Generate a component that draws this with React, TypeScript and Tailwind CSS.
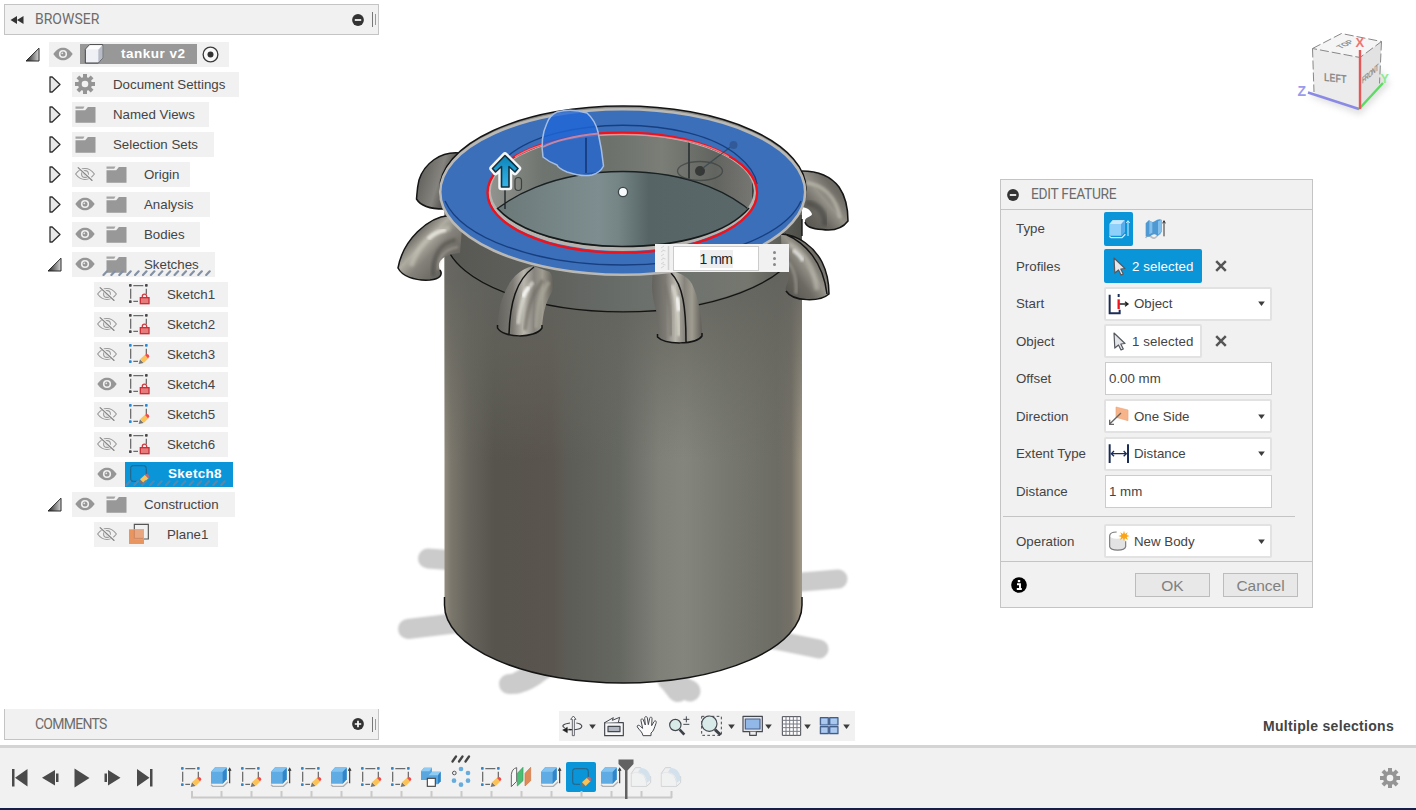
import React from 'react';

type P = { className?: string };

/* ---------- generic glyphs ---------- */

const Caret = ({ className = '' }: P) => (
  <svg viewBox="0 0 8 6" className={`h-[5px] w-[7px] shrink-0 ${className}`}>
    <path d="M0 0.5h8L4 6z" fill="#3c3c3c" />
  </svg>
);

const RoundSign = ({ plus = false }: { plus?: boolean }) => (
  <svg viewBox="0 0 12 12" className="h-[12px] w-[12px] shrink-0">
    <circle cx="6" cy="6" r="5.9" fill="#333" />
    <path d={plus ? 'M2.8 6h6.4M6 2.8v6.4' : 'M2.8 6h6.4'} stroke="#fff" strokeWidth="1.7" />
  </svg>
);

const Gear = ({ className = '' }: P) => (
  <svg viewBox="-10 -10 20 20" className={`h-5 w-5 shrink-0 ${className}`}>
    {[0, 45, 90, 135].map((a) => (
      <rect key={a} x="-2" y="-10" width="4" height="20" fill="#959595" transform={`rotate(${a})`} />
    ))}
    <circle r="7" fill="#959595" />
    <circle r="3.3" fill="#f3f3f3" />
  </svg>
);

const Eye = () => (
  <svg viewBox="0 0 20 14" className="h-[14px] w-5 shrink-0">
    <path d="M0.3 7C3.5 2.4 6.5 0.7 10 0.7S16.500 2.400 19.700 7C16.500 11.600 13.500 13.300 10 13.300S3.500 11.600 0.300 7z" fill="#969696" />
    <circle cx="10" cy="7" r="4.1" fill="#f1f1f1" />
    <circle cx="10" cy="7" r="2.5" fill="#969696" />
    <circle cx="9.300" cy="6.300" r="0.9" fill="#e8e8e8" />
  </svg>
);

const EyeOff = () => (
  <svg viewBox="0 0 20 14" className="h-[14px] w-5 shrink-0" fill="none" stroke="#999">
    <path d="M0.600 7C3.500 3 6.500 1.500 10 1.500S16.500 3 19.400 7C16.500 11 13.500 12.500 10 12.500S3.500 11 0.600 7z" strokeWidth="1.100" />
    <circle cx="10" cy="7" r="3.400" strokeWidth="1.100" />
    <circle cx="10" cy="7" r="1" strokeWidth="0.900" />
    <path d="M3.200 0.200L18 13.800" stroke="#f1f1f1" strokeWidth="2.600" />
    <path d="M2.800 0.400L17.400 13.800" strokeWidth="1.200" stroke="#858585" />
  </svg>
);

const Folder = () => (
  <svg viewBox="0 0 20 17" className="h-[17px] w-[21px] shrink-0">
    <path d="M0 0.500h9l-1.300 2.200H0z" fill="#a5a5a5" />
    <path d="M0 4.300h9.700L12.400 1H20v15.700H0z" fill="#989898" />
  </svg>
);

const Closed = () => (
  <svg viewBox="0 0 12 17" className="h-[17px] w-3 shrink-0">
    <path d="M1 1L3.200 1 11 8.500 3.200 16 1 16z" fill="#e9e9e9" stroke="#303030" strokeWidth="1.300" strokeLinejoin="round" />
  </svg>
);

const Open = () => (
  <svg viewBox="0 0 15 15" className="h-[15px] w-[15px] shrink-0">
    <defs>
      <linearGradient id="openTri" x1="0" x2="1">
        <stop offset="0.2" stopColor="#444" />
        <stop offset="1" stopColor="#d4d4d4" />
      </linearGradient>
    </defs>
    <path d="M1 14L14 1.200V14z" fill="url(#openTri)" stroke="#2a2a2a" strokeWidth="1" />
  </svg>
);

type SketchKind = 'lock' | 'pencil' | 'active';

const Sketch = ({ kind }: { kind: SketchKind }) => {
  const dot = kind === 'lock' ? '#484848' : kind === 'pencil' ? '#2d87cf' : '#20719c';
  const line = kind === 'active' ? '#24698f' : '#6b6b6b';
  return (
    <svg viewBox="0 0 66 66" className="h-[22px] w-[22px] shrink-0">
      <path d="M16 8H46M8 17V47M55 17V34M16 55H30" stroke={line} strokeWidth="3.800" fill="none" />
      {kind === 'active' ? (
        <path d="M8 17Q8 8 16 8M46 8Q55 8 55 17M8 47Q8 55 16 55" stroke={line} strokeWidth="3.400" fill="none" />
      ) : (
        <g fill={dot}>
          <rect x="3" y="3" width="8" height="8" rx="2" />
          <rect x="51" y="3" width="8" height="8" rx="2" />
          <rect x="3" y="52" width="8" height="8" rx="2" />
        </g>
      )}
      {kind === 'lock' ? (
        <g>
          <path d="M43 46V40a6.500 6.500 0 0 1 13 0V46" fill="none" stroke="#cc3b42" strokeWidth="4" />
          <rect x="37" y="44" width="26" height="18" fill="#e77b7b" stroke="#c5323a" strokeWidth="4" />
        </g>
      ) : (
        <g>
          <path d="M32 63L36 49 47 60z" fill="#777" />
          <path d="M36 49L51 35 62 45 47 60z" fill="#fbc257" />
          <path d="M51 36L55 32Q64 34 64 41L60 46z" fill={kind === 'active' ? '#b8697a' : '#ee4a50'} />
        </g>
      )}
    </svg>
  );
};

const PlaneIcon = () => (
  <svg viewBox="0 0 66 66" className="h-[22px] w-[22px] shrink-0">
    <path d="M19 20V4H61V48H48" fill="none" stroke="#555" strokeWidth="3.500" />
    <rect x="3" y="19" width="45" height="44" fill="#e8955f" />
    <rect x="19" y="19" width="29" height="30" fill="#e9a781" />
    <path d="M19 20V46H46" fill="none" stroke="#c9805a" strokeWidth="2.500" />
  </svg>
);

const CubeWhite = () => (
  <svg viewBox="0 0 60 60" className="h-5 w-5 shrink-0">
    <path d="M4 16L17 2H56V42L43 57H4z" fill="#eef0f6" stroke="#434343" strokeWidth="3" strokeLinejoin="round" />
    <path d="M43 17L56 3V42L43 56z" fill="#b9bcc6" />
    <path d="M6 16L17 4H54L43 16z" fill="#fdfdfe" />
  </svg>
);

/* ---------- browser tree ---------- */

const Hatch = ({ active = false, className = '' }: { active?: boolean; className?: string }) => (
  <svg viewBox="0 0 110 6" className={`absolute h-[6px] w-[110px] ${className}`}>
    {Array.from({ length: active ? 13 : 14 }, (_, i) => (
      <path key={i} d={`M${1.500 + i * 7.900} 5L${5 + i * 7.900} 1.300`} stroke={active ? '#5c87a8' : '#8391a5'} strokeWidth="2.200" strokeLinecap="round" />
    ))}
  </svg>
);

type Node = { label: string; pill: string; open?: boolean; eye?: boolean; icon?: 'gear' };

const FolderRow = ({ label, pill, open, eye, icon }: Node) => (
  <div className="flex h-[30px] items-center pl-[45px]">
    <div className="flex w-[23px] justify-start">
      {open ? <div className="-ml-[2px]"><Open /></div> : <Closed />}
    </div>
    <div className={`relative flex h-[25px] items-center bg-[#f1f1f1] pl-[3px] ${pill}`}>
      {eye === undefined ? null : <div className="mr-[11px]">{eye ? <Eye /> : <EyeOff />}</div>}
      {icon === 'gear' ? <Gear className="mr-[1px]" /> : <Folder />}
      <span className="ml-[17px] pt-[1px]">{label}</span>
      {label === 'Sketches' && <Hatch className="left-[30px] top-[18px]" />}
    </div>
  </div>
);

const SketchRow = ({ label, eye, kind }: { label: string; eye?: boolean; kind: SketchKind }) => (
  <div className="flex h-[30px] items-center pl-[90px]">
    <div className="flex h-[25px] w-[134px] items-center bg-[#f1f1f1] pl-[3px]">
      {eye ? <Eye /> : <EyeOff />}
      <div className="ml-[11px]"><Sketch kind={kind} /></div>
      <span className="ml-[17px] pt-[1px]">{label}</span>
    </div>
  </div>
);

const Browser = () => (
  <div className="flex flex-col pt-1 text-[13.300px] text-[#444]">
    <div className="flex h-[30px] items-center pl-[21px]">
      <div className="w-6"><Open /></div>
      <div className="flex h-[25px] w-[180px] items-center bg-[#f1f1f1] pl-1">
        <Eye />
        <div className="ml-[7px] flex h-5 w-[117px] items-center bg-[#989898] pl-1">
          <CubeWhite />
          <span className="ml-[17px] pt-[1px] text-[13.500px] font-bold tracking-[0.500px] text-white">tankur v2</span>
        </div>
        <svg viewBox="0 0 18 18" className="ml-[5px] h-[17px] w-[17px]">
          <circle cx="9" cy="9" r="7.800" fill="#fafafa" stroke="#3a3a3a" strokeWidth="1.400" />
          <circle cx="9" cy="9" r="3.200" fill="#333" />
        </svg>
      </div>
    </div>
    <FolderRow label="Document Settings" pill="w-[167px]" icon="gear" />
    <FolderRow label="Named Views" pill="w-[137px]" />
    <FolderRow label="Selection Sets" pill="w-[142px]" />
    <FolderRow label="Origin" pill="w-[118px]" eye={false} />
    <FolderRow label="Analysis" pill="w-[138px]" eye />
    <FolderRow label="Bodies" pill="w-[128px]" eye />
    <FolderRow label="Sketches" pill="w-[143px]" eye open />
    <SketchRow label="Sketch1" kind="lock" />
    <SketchRow label="Sketch2" kind="lock" />
    <SketchRow label="Sketch3" kind="pencil" />
    <SketchRow label="Sketch4" kind="lock" eye />
    <SketchRow label="Sketch5" kind="pencil" />
    <SketchRow label="Sketch6" kind="lock" />
    <div className="flex h-[30px] items-center pl-[90px]">
      <div className="flex h-[25px] w-[139px] items-center bg-[#f1f1f1] pl-[3px]">
        <Eye />
        <div className="relative ml-2 flex h-[25px] w-[108px] items-center bg-[#0a95d9] pl-[3px]">
          <Sketch kind="active" />
          <Hatch active className="left-0 top-[18px]" />
          <span className="relative ml-[18px] pt-[1px] text-[13.500px] font-bold tracking-[0.300px] text-white">Sketch8</span>
        </div>
      </div>
    </div>
    <FolderRow label="Construction" pill="w-[163px]" eye open />
    <div className="flex h-[30px] items-center pl-[90px]">
      <div className="flex h-[25px] w-[124px] items-center bg-[#f1f1f1] pl-[3px]">
        <EyeOff />
        <div className="ml-[11px]"><PlaneIcon /></div>
        <span className="ml-[17px] pt-[1px]">Plane1</span>
      </div>
    </div>
  </div>
);

const DragHandle = () => (
  <div className="ml-2 flex items-center gap-[2px]">
    <div className="h-[15px] w-[1px] bg-[#777]" />
    <div className="h-[11px] w-[1px] bg-[#999]" />
  </div>
);

/* ---------- model ---------- */

const Model = () => (
  <svg viewBox="0 0 1416 745" className="absolute left-0 top-0 h-[745px] w-[1416px]">
    <defs>
      <linearGradient id="body" x1="444" x2="802" gradientUnits="userSpaceOnUse">
        <stop offset="0" stopColor="#938d7f" />
        <stop offset="0.020" stopColor="#7b776d" />
        <stop offset="0.070" stopColor="#65635b" />
        <stop offset="0.140" stopColor="#56544d" />
        <stop offset="0.300" stopColor="#5a554e" />
        <stop offset="0.350" stopColor="#5d5d57" />
        <stop offset="0.490" stopColor="#656761" />
        <stop offset="0.600" stopColor="#7f8078" />
        <stop offset="0.670" stopColor="#84857d" />
        <stop offset="0.780" stopColor="#787971" />
        <stop offset="0.930" stopColor="#6c6c64" />
        <stop offset="0.970" stopColor="#747067" />
        <stop offset="1" stopColor="#a19887" />
      </linearGradient>
      <linearGradient id="bodyTop" x1="0" x2="0" y1="280" y2="460" gradientUnits="userSpaceOnUse">
        <stop offset="0" stopColor="#63635e" stopOpacity="0.850" />
        <stop offset="0.400" stopColor="#66665f" stopOpacity="0.550" />
        <stop offset="1" stopColor="#6a6a63" stopOpacity="0" />
      </linearGradient>
      <linearGradient id="collar" x1="444" x2="802" gradientUnits="userSpaceOnUse">
        <stop offset="0" stopColor="#585853" />
        <stop offset="0.300" stopColor="#5f615c" />
        <stop offset="0.550" stopColor="#6b706d" />
        <stop offset="0.850" stopColor="#75776f" />
        <stop offset="1" stopColor="#4d4d48" />
      </linearGradient>
      <linearGradient id="floor" x1="497" x2="750" gradientUnits="userSpaceOnUse">
        <stop offset="0" stopColor="#6b7878" />
        <stop offset="0.400" stopColor="#7e8e90" />
        <stop offset="0.480" stopColor="#758485" />
        <stop offset="0.600" stopColor="#566466" />
        <stop offset="1" stopColor="#5b6869" />
      </linearGradient>
      <linearGradient id="wall" x1="490" x2="755" gradientUnits="userSpaceOnUse">
        <stop offset="0" stopColor="#92938e" />
        <stop offset="0.200" stopColor="#6e746f" />
        <stop offset="0.450" stopColor="#6c716c" />
        <stop offset="0.650" stopColor="#7b7e77" />
        <stop offset="0.850" stopColor="#62645f" />
        <stop offset="1" stopColor="#777874" />
      </linearGradient>
      <linearGradient id="pipeL" x1="0" x2="1" y1="0" y2="1">
        <stop offset="0" stopColor="#555550" />
        <stop offset="0.280" stopColor="#6f6d66" />
        <stop offset="0.420" stopColor="#aeaba1" />
        <stop offset="0.560" stopColor="#84817a" />
        <stop offset="1" stopColor="#4c4a45" />
      </linearGradient>
      <linearGradient id="pipeB" x1="0" x2="1" y1="0.300" y2="0.700">
        <stop offset="0" stopColor="#5c5b57" />
        <stop offset="0.500" stopColor="#85837d" />
        <stop offset="0.700" stopColor="#5d5c58" />
        <stop offset="1" stopColor="#4c4b47" />
      </linearGradient>
      <linearGradient id="pipeV" x1="0" x2="1">
        <stop offset="0" stopColor="#64625d" />
        <stop offset="0.270" stopColor="#7c7a73" />
        <stop offset="0.470" stopColor="#b9b7ad" />
        <stop offset="0.650" stopColor="#85837c" />
        <stop offset="0.800" stopColor="#a09c91" />
        <stop offset="1" stopColor="#5f5d57" />
      </linearGradient>
      <linearGradient id="pipeR" x1="1" x2="0" y1="0" y2="1">
        <stop offset="0" stopColor="#55544e" />
        <stop offset="0.300" stopColor="#6f6d66" />
        <stop offset="0.480" stopColor="#96938a" />
        <stop offset="0.650" stopColor="#6c6a63" />
        <stop offset="1" stopColor="#4f4d47" />
      </linearGradient>
      <linearGradient id="arrow" x1="0" x2="0" y1="0" y2="1">
        <stop offset="0" stopColor="#0d84b8" />
        <stop offset="1" stopColor="#34b5ea" />
      </linearGradient>
      <filter id="soft"><feGaussianBlur stdDeviation="1" /></filter>
      <filter id="shade"><feGaussianBlur stdDeviation="1.8" /></filter>
      <filter id="haze"><feGaussianBlur stdDeviation="3" /></filter>
      <clipPath id="hole"><ellipse cx="622.300" cy="191" rx="131.500" ry="56" /></clipPath>
    </defs>

    {/* ground shadows */}
    <g stroke="#cbcbcb" strokeLinecap="round" fill="none" filter="url(#soft)">
      <path d="M428 558.500L462 561" strokeWidth="20" />
      <path d="M408 629L466 622" strokeWidth="20" />
      <path d="M838 579L790 583" strokeWidth="19" />
      <path d="M819 649L770 639" strokeWidth="19" />
      <path d="M509 684Q526 685 545 667" strokeWidth="20" />
      <path d="M517 683L545 668" strokeWidth="21" />
      <path d="M690 691L668 680" strokeWidth="21" />
      <path d="M678 691L668 678" strokeWidth="22" />
    </g>

    {/* rear pipes */}
    <path d="M460 153C440 151 424 164 419 180C417 188 417 194 416.500 199C420 205 430 209 444 209L450 180z" fill="url(#pipeB)" />
    <path d="M460 153C440 151 424 164 419 180C417 188 417 194 416.500 199C420 205 430 209 444 209" fill="none" stroke="#151515" strokeWidth="1.500" />
    <path d="M798 171C815 171 829 174 839 187C846 197 848 209 848 221C842 229 832 231 822 229.500C812 229 806 226 805 222C804 217 812 217 812 214C810 209 804 206 798 208z" fill="url(#pipeR)" />
    <path d="M806 203C818 204 826 212 825 226" fill="none" stroke="#45443f" strokeWidth="6" opacity="0.600" filter="url(#shade)" />
    <path d="M806 183C822 184 836 196 840 218" fill="none" stroke="#c2bfb3" strokeWidth="4" opacity="0.600" filter="url(#soft)" />
    <path d="M802 171C815 171 829 174 839 187C846 197 848 209 848 221C842 229 832 231 822 229.500C812 229 806 226 805 222" fill="none" stroke="#151515" strokeWidth="1.500" />

    {/* tank body */}
    <path d="M444.500 210V605A178.700 78 0 0 0 802 605V210z" fill="url(#body)" />
    <path d="M444.500 210V460H802V210z" fill="url(#bodyTop)" />
    <path d="M444.500 215V233A178.700 77.500 0 0 0 802 233V215z" fill="url(#collar)" />
    <path d="M446 245A178.700 77.500 0 0 0 800 245" fill="none" stroke="#141414" strokeWidth="1.400" />
    <path d="M444.500 597V605A178.700 78 0 0 0 802 605V597" fill="none" stroke="#141414" strokeWidth="1.500" />
    <path d="M802 219V236" stroke="#141414" strokeWidth="1.400" />

    {/* front pipes */}
    <path d="M449 215C428 217 403 240 398 268C402 276 414 281 430 280C440 279 443 275 440 270C436 262 443 254 460 253L462 228z" fill="url(#pipeL)" />
    <path d="M456 240C442 242 432 254 433 276" fill="none" stroke="#4d4b46" strokeWidth="4" opacity="0.600" filter="url(#shade)" />
    <path d="M450 228C434 230 419 244 411 266" fill="none" stroke="#c9c6ba" strokeWidth="5" opacity="0.600" filter="url(#shade)" />
    <path d="M446 230C439 231 433 234 428 239" fill="none" stroke="#f1f0e8" strokeWidth="4" opacity="0.700" filter="url(#soft)" />
    <path d="M458 247C445 249 438 257 438 270" fill="none" stroke="#b3b0a5" strokeWidth="2" opacity="0.500" filter="url(#soft)" />
    <path d="M449 215.500C428 217 403 240 398 268C402 276 414 281 430 280C440 279 443 275 440 270" fill="none" stroke="#151515" strokeWidth="1.500" />

    <path d="M533 266C513 271 505 288 500 306C498 317 497.500 324 497.500 328C503 338 535 339 542 328C543 312 546 302 552 292C555 286 554 278 550 272z" fill="url(#pipeV)" />
    <path d="M549 282C540 294 537 305 536 328" fill="none" stroke="#a8a599" strokeWidth="4" opacity="0.700" filter="url(#soft)" />
    <path d="M543 280C534 292 528 303 525 330" fill="none" stroke="#6f6c65" strokeWidth="4" opacity="0.600" filter="url(#soft)" />
    <path d="M533 282C526 290 521 300 518 324" fill="none" stroke="#e0dfd6" strokeWidth="4" opacity="0.700" filter="url(#soft)" />
    <path d="M529 287C526 290 524 293 523 297" fill="none" stroke="#fff" strokeWidth="3.500" opacity="0.800" filter="url(#soft)" />
    <path d="M497.500 325V328C503 338 535 339 542 328V325M534 267C516 280 510 303 509 334" fill="none" stroke="#151515" strokeWidth="1.500" />

    <path d="M653 273C651 284 652 298 656 310C658 322 658 330 658 337C665 345 696 345 702 336C702 318 699 298 692 284C688 277 682 274 675 272z" fill="url(#pipeV)" />
    <path d="M664 285C670 298 671 316 671 336" fill="none" stroke="#77746c" strokeWidth="4" opacity="0.600" filter="url(#soft)" />
    <path d="M672 285C677 298 679 312 679 336" fill="none" stroke="#dfddd2" strokeWidth="4" opacity="0.700" filter="url(#soft)" />
    <path d="M677 297C678 302 679 306 679 311" fill="none" stroke="#fff" strokeWidth="4" opacity="0.800" filter="url(#soft)" />
    <path d="M657.500 334V337C665 345 696 345 702 336V333M671 273C683 285 686 308 686 342" fill="none" stroke="#151515" strokeWidth="1.500" />

    <path d="M781 234C799 235 814 247 822 262C828 274 829 286 829 294C820 302 793 302 786 291C784 286 790 282 788 276C787 272 785 270 782 269z" fill="url(#pipeR)" />
    <path d="M788 262C795 270 797 280 796 294" fill="none" stroke="#b3b0a5" strokeWidth="3" opacity="0.450" filter="url(#soft)" />
    <path d="M789 244C804 252 814 267 817 290" fill="none" stroke="#c5c2b7" strokeWidth="5" opacity="0.550" filter="url(#shade)" />
    <path d="M793 250C797 253 801 257 803 261" fill="none" stroke="#fff" strokeWidth="4" opacity="0.600" filter="url(#soft)" />
    <path d="M781 234C799 235 814 247 822 262C828 274 829 286 829 294C820 302 793 302 786 291M785 234C806 243 823 262 827 294" fill="none" stroke="#151515" strokeWidth="1.500" />

    {/* flange */}
    <ellipse cx="622.900" cy="189.500" rx="183.200" ry="83.500" fill="#8a8a86" stroke="#141414" strokeWidth="1.500" />
    <ellipse cx="622.700" cy="192" rx="182.500" ry="82.800" fill="#3c6fb9" stroke="#b9b8b5" strokeWidth="2.600" />
    <path d="M445 201C462 238 535 265 623 265C703 265 784 239 801 201" fill="none" stroke="#173f80" strokeWidth="1.400" />
    <path d="M508 156C556 115 690 115 738 156C748 164 755 172 757 184" fill="none" stroke="#173f80" strokeWidth="1.400" />

    {/* bore */}
    <ellipse cx="622.300" cy="192.500" rx="134" ry="58.500" fill="#b7b3ae" />
    <g clipPath="url(#hole)">
      <rect x="486" y="130" width="272" height="120" fill="url(#wall)" />
      <path d="M480 225C505 196 555 171.500 623 171.500C690 171.500 738 194 765 225V260H480z" fill="url(#floor)" />
      <path d="M480 225C505 196 555 171.500 623 171.500C690 171.500 738 194 765 225M586 130V172.500M689 140V178.500M505 180V209M753 180V200" fill="none" stroke="#1a2122" strokeWidth="1.300" />
    </g>
    <path d="M497 208C520 233 570 246.500 622 246.500C680 246.500 728 233 749 208" fill="none" stroke="#161a1a" strokeWidth="1.600" />
    <ellipse cx="622.300" cy="192.700" rx="134.800" ry="60" fill="none" stroke="#f0111b" strokeWidth="2.300" />
    <path d="M515 157C560 127 685 127 729 157" fill="none" stroke="#f08d90" strokeWidth="1.400" opacity="0.800" />

    {/* joint marker */}
    <g opacity="0.600">
      <ellipse cx="700" cy="171" rx="22.500" ry="9.500" fill="none" stroke="#333b3b" strokeWidth="1.400" />
      <circle cx="700" cy="171" r="5" fill="#141818" />
      <path d="M703 168L733 145" stroke="#263b45" strokeWidth="1.400" />
      <circle cx="733.500" cy="145" r="4" fill="#2c4d84" />
    </g>
    <rect x="515" y="177.500" width="6.500" height="13" rx="3.200" fill="none" stroke="#3b4141" strokeWidth="1.200" />

    {/* picked profile */}
    <path d="M557 112Q572 108 587 113Q595 120 598 132Q602 150 603.500 166Q600 173 592 175Q582 177 567 172Q558 168 557 165Q549 162 543 157Q540 138 547 123Q550 115 557 112z" fill="#1f66d8" fillOpacity="0.780" stroke="#a5bde2" strokeWidth="1.500" />
    <path d="M543 147C556 140 575 136 599 133.500" fill="none" stroke="#e0909f" strokeWidth="1.800" opacity="0.800" />
    <path d="M586 138V173" stroke="#15316e" strokeWidth="1.300" />

    <circle cx="623" cy="192" r="4.600" fill="#f7fafa" stroke="#39464a" strokeWidth="1.300" />

    {/* direction arrow */}
    <path d="M505 155.500L518 168.500L515 172L509 166.500V187H501.500V166.500L495.500 172L492.500 168.500z" fill="none" stroke="#f4f6f7" strokeWidth="6.500" strokeLinejoin="round" />
    <path d="M505 155.500L518 168.500L515 172L509 166.500V187H501.500V166.500L495.500 172L492.500 168.500z" fill="url(#arrow)" stroke="#12303d" strokeWidth="1.600" strokeLinejoin="round" />

    {/* view cube */}
    <path d="M1308 96L1360 115L1390 84L1380 70z" fill="#c9c9c9" opacity="0.550" filter="url(#haze)" />
    <path d="M1312.500 48.500L1341.500 33.500L1381.500 41.500L1360 57.500z" fill="#f5f5f5" />
    <path d="M1312.500 48.500L1360 57.500L1359 109.500L1314 92z" fill="#ececec" />
    <path d="M1360 57.500L1381.500 41.500L1379.500 83.500L1359 109.500z" fill="#e2e2e2" />
    <path d="M1312.500 48.500L1341.500 33.500L1381.500 41.500L1360 57.500zM1312.500 48.500L1314 92M1381.500 41.500L1379.500 83.500" fill="none" stroke="#888" strokeWidth="1" strokeDasharray="9 3" />
    <path d="M1308 92.500L1359 109" stroke="#8a8ae6" strokeWidth="2.400" />
    <path d="M1359 109L1383 83" stroke="#5bdb62" strokeWidth="2.400" />
    <path d="M1360 50V109" stroke="#e25757" strokeWidth="2.400" />
    <g fontFamily="Liberation Sans, sans-serif" fontWeight="bold">
      <text transform="matrix(1 0.110 0 1.300 1324 81)" fontSize="9" fill="#8b8b8b" textLength="22.500">LEFT</text>
      <text transform="matrix(0.720 -0.620 0 1.250 1362 84)" fontSize="7.500" fill="#8f8f8f" textLength="23">FRONT</text>
      <text transform="matrix(0.600 -0.300 0.700 0.350 1341 49)" fontSize="11" fill="#8f8f8f">TOP</text>
      <text x="1355.500" y="46.500" fontSize="13" fill="#ef7474">X</text>
      <text x="1380.500" y="83" fontSize="12.500" fill="#8eea90">Y</text>
      <text x="1297.500" y="95.500" fontSize="14" fill="#9b9bed">Z</text>
    </g>
  </svg>
);

const ValueInput = () => (
  <div className="absolute left-[655px] top-[244px] flex h-7 w-[134px] items-center bg-[#f1f1f1]">
    <svg viewBox="0 0 18 28" className="h-7 w-[18px]">
      <path d="M6 4l3-2M6 8l3-2M6 12l3-2M6 16l3-2M6 20l3-2M6 24l3-2M7.500 6l3 1M7.500 14l3 1M7.500 20l3 1" stroke="#d5d5d5" />
      <path d="M13.500 2V26" stroke="#d2d2d2" strokeWidth="1.500" />
    </svg>
    <div className="flex h-[25px] w-[86px] items-center justify-center border border-[#ccc] bg-white pt-[1px] text-[14px] leading-[18px] tracking-[-0.500px] text-[#222]">
      <span className="bg-[#eee]">1 mm</span>
    </div>
    <div className="flex flex-1 flex-col items-center gap-[3px]">
      <div className="h-[3px] w-[3px] rounded-full bg-[#888]" />
      <div className="h-[3px] w-[3px] rounded-full bg-[#888]" />
      <div className="h-[3px] w-[3px] rounded-full bg-[#888]" />
    </div>
  </div>
);

/* ---------- navigation bar ---------- */

const Nav = ({ box, className, children }: { box: string; className: string; children: React.ReactNode }) => (
  <svg viewBox={box} className={`h-[22px] w-[22px] shrink-0 ${className}`} fill="none" stroke="#44484f" strokeWidth="3.500" strokeLinejoin="round">
    {children}
  </svg>
);

const NavBar = () => (
  <div className="flex h-[30px] w-[296px] items-center bg-[#f1f1f1]">
    <Nav box="36 30 66 66" className="ml-[3px]">
      <path d="M60 54C38 57 34 64 44 68M56 73C80 77 98 70 95 62C93 57 86 55 79 54" />
      <path d="M38 75L52 67V83zM50 75H64V72" fill="#222" stroke="#222" strokeWidth="1.500" />
      <path d="M70 33L78 43H73V92H67V43H62z" fill="#fff" strokeWidth="2.500" />
    </Nav>
    <Caret className="ml-[5px]" />
    <Nav box="159 30 66 66" className="ml-[7px]">
      <path d="M164 53H220V92H164z" fill="#f7f7f7" />
      <path d="M174 64H210V80H174z" fill="#b2b7c2" />
      <path d="M164 53L190 38 187 46 209 37 205 52" fill="#f7f7f7" strokeWidth="3" />
    </Nav>
    <Nav box="258 30 66 66" className="ml-[11px]">
      <path d="M279 92C277 80 268 76 262 66C260 60 267 59 271 64L278 70L273 47C272 41 278 39 280 45L286 60L284 40C284 33 291 33 292 39L295 59L299 40C301 34 307 36 306 42L305 62L312 50C315 45 321 48 318 55C313 67 312 78 303 84V92z" fill="#fbfbfb" strokeWidth="3" />
    </Nav>
    <Nav box="354 30 66 66" className="ml-[10px]">
      <path d="M389 74L403 89" stroke="#3d4148" strokeWidth="8" />
      <circle cx="376" cy="60" r="17" fill="#d8ebe9" />
      <path d="M400 43H418M409 34V52M400 58H418" strokeWidth="3" />
    </Nav>
    <Nav box="450 30 66 66" className="ml-[10px]">
      <path d="M455 34H514V91H455z" strokeWidth="3" strokeDasharray="8 7" />
      <path d="M495 74L512 90" stroke="#3d4148" strokeWidth="9" />
      <circle cx="478" cy="56" r="23" fill="#d8ebe9" />
    </Nav>
    <Caret className="ml-[6px]" />
    <Nav box="576 30 66 66" className="ml-[7px]">
      <path d="M579 34H637V80H579z" fill="#e6e6e6" />
      <path d="M586 42H630V72H586z" fill="#92b8e8" stroke="#46618f" />
      <path d="M599 80V91H619V80" fill="#eee" />
    </Nav>
    <Caret className="ml-[1px]" />
    <Nav box="693 30 66 66" className="ml-[9px]">
      <path d="M697 35H752V91H697z" fill="#fff" strokeWidth="3" />
      <path d="M708 35V91M719 35V91M730 35V91M741 35V91M697 46H752M697 57H752M697 68H752M697 79H752" stroke="#777b84" strokeWidth="3" />
    </Nav>
    <Caret className="ml-[1px]" />
    <Nav box="804 30 66 66" className="ml-[7px]">
      <path d="M811 38H835V60H811zM839 38H864V60H839zM811 65H835V86H811zM839 65H864V86H839z" fill="#8eb4e5" stroke="#435d89" />
      <path d="M816 43H830V55H816zM844 43H859V55H844zM816 70H830V81H816zM844 70H859V81H844z" fill="#a9c8ee" stroke="#b9d2f1" strokeWidth="2" />
    </Nav>
    <Caret className="ml-[3px]" />
  </div>
);

/* ---------- edit feature dialog ---------- */

const Cursor = () => (
  <svg viewBox="0 0 13 19" className="h-[19px] w-[13px] shrink-0">
    <path d="M1 1L12 11.500L7.800 12L10.300 17L8 18L5.500 13L1.800 16z" fill="#e4e6ea" stroke="#55595f" strokeWidth="1.200" strokeLinejoin="round" />
  </svg>
);

const Clear = () => (
  <svg viewBox="0 0 12 12" className="ml-[13px] h-3 w-3">
    <path d="M1.200 1.200L10.800 10.800M10.800 1.200L1.200 10.800" stroke="#555" strokeWidth="2.500" />
  </svg>
);

const Field = ({ label, children, className = 'h-[37.500px]' }: { label: string; children: React.ReactNode; className?: string }) => (
  <div className={`flex items-center ${className}`}>
    <span className="w-[88px] shrink-0 pt-[1px]">{label}</span>
    {children}
  </div>
);

const Select = ({ icon, text }: { icon: React.ReactNode; text: string }) => (
  <div className="flex h-[34px] w-[168px] items-center rounded-[2px] border-2 border-[#e2e2e2] bg-white pl-[2px] pr-[5px]">
    {icon}
    <span className="ml-1 flex-1 pt-[1px]">{text}</span>
    <Caret />
  </div>
);

const TextBox = ({ text }: { text: string }) => (
  <div className="ml-[1px] flex h-[33px] w-[167px] items-center border border-[#ccc] bg-white pl-[3px] pt-[1px]">{text}</div>
);

const SelectIcon = ({ children }: { children: React.ReactNode }) => (
  <svg viewBox="0 0 66 66" className="h-[22px] w-[22px] shrink-0">{children}</svg>
);

const EditFeature = () => (
  <div className="flex h-[429px] w-[313px] flex-col border border-[#c4c4c4] bg-[#f1f1f1] text-[13.300px] text-[#444]">
    <div className="flex h-[30px] shrink-0 items-center border-b border-[#c4c4c4] pl-[6px]">
      <RoundSign />
      <span className="ml-3 font-['Roboto'] text-[13.800px] tracking-[-0.300px] text-[#6c6c6c]">EDIT FEATURE</span>
    </div>
    <div className="flex flex-col pl-[15px]">
      <Field label="Type">
        <div className="flex h-[34px] w-[29px] items-center justify-center rounded-[2px] bg-[#0a95d9]">
          <SelectIcon>
            <path d="M4 55L9 59H42L52 49" fill="none" stroke="#d9e6ee" strokeWidth="4" />
            <path d="M4 18L14 6H50V42L39 53H4z" fill="#8fd0fb" />
            <path d="M39 18L50 6V42L39 53z" fill="#58acec" />
            <path d="M5 18L14 7H49L39 18z" fill="#c9e8fd" />
            <path d="M60 54V10M55 15L60 8L65 15" stroke="#d8efff" strokeWidth="3" fill="none" />
          </SelectIcon>
        </div>
        <div className="ml-[11px]">
          <SelectIcon>
            <path d="M5 60Q11 48 22 57T42 50L50 46" fill="none" stroke="#b9bdc2" strokeWidth="5" />
            <path d="M5 16L15 6Q24 16 33 9T53 5V42L41 54Q33 44 23 52T5 54z" fill="#4f99d3" />
            <path d="M16 8L25 12V44L16 49zM42 10L51 6V42L42 50z" fill="#84c0ec" />
            <path d="M60 55V10M56 16L60 8L64 16" stroke="#333" strokeWidth="3" fill="none" />
          </SelectIcon>
        </div>
      </Field>
      <Field label="Profiles">
        <div className="flex h-[34px] w-[98px] items-center rounded-[2px] bg-[#0a95d9] pl-[9px] text-white">
          <Cursor />
          <span className="ml-[6px] whitespace-nowrap pt-[1px] tracking-[0.100px]">2 selected</span>
        </div>
        <Clear />
      </Field>
      <Field label="Start">
        <Select
          text="Object"
          icon={
            <SelectIcon>
              <path d="M5 5V61H35V50" fill="none" stroke="#1b2d57" strokeWidth="6" />
              <path d="M32 3V12" stroke="#1b2d57" strokeWidth="6" />
              <path d="M32 19V48" stroke="#f0141c" strokeWidth="7" />
              <path d="M35 33H58M51 26L60 33L51 40" stroke="#222" strokeWidth="4" fill="none" />
            </SelectIcon>
          }
        />
      </Field>
      <Field label="Object">
        <div className="flex h-[34px] w-[98px] items-center rounded-[2px] border-2 border-[#e2e2e2] bg-white pl-[7px]">
          <Cursor />
          <span className="ml-[6px] whitespace-nowrap pt-[1px] tracking-[0.100px]">1 selected</span>
        </div>
        <Clear />
      </Field>
      <Field label="Offset"><TextBox text="0.00 mm" /></Field>
      <Field label="Direction">
        <Select
          text="One Side"
          icon={
            <SelectIcon>
              <path d="M24 6L60 15V47L24 37z" fill="#f7b48a" stroke="#efa67a" strokeWidth="2" />
              <path d="M39 24L5 57M5 44V58H18" fill="none" stroke="#666" strokeWidth="4" />
            </SelectIcon>
          }
        />
      </Field>
      <Field label="Extent Type">
        <Select
          text="Distance"
          icon={
            <SelectIcon>
              <path d="M5 4V60M60 4V60" stroke="#1b2d57" strokeWidth="6" />
              <path d="M10 32H55M18 24L10 32L18 40M47 24L55 32L47 40" fill="none" stroke="#1b2d57" strokeWidth="4" />
            </SelectIcon>
          }
        />
      </Field>
      <Field label="Distance"><TextBox text="1 mm" /></Field>
    </div>
    <div className="ml-[2px] mt-[6px] h-[1px] w-[292px] bg-[#c4c4c4]" />
    <div className="flex flex-1 flex-col justify-center pl-[15px] pt-[4px]">
      <Field label="Operation" className="h-[34px]">
        <Select
          text="New Body"
          icon={
            <SelectIcon>
              <path d="M5 14V50C8 64 50 64 53 50V30" fill="#e3e3e3" />
              <ellipse cx="26" cy="16" rx="22" ry="10" fill="#fff" />
              <path d="M26 6C10 6 5 10 5 18V50C8 64 50 64 53 50V34" fill="none" stroke="#7b7b7b" strokeWidth="3.500" />
              <path d="M48 2L51 12L59 7L56 15L65 18L56 21L60 30L51 25L48 34L45 25L36 30L40 21L31 18L40 15L37 7L45 12z" fill="#f9a51a" />
            </SelectIcon>
          }
        />
      </Field>
    </div>
    <div className="flex h-[46px] shrink-0 items-center border-t border-[#c4c4c4] pl-[10px]">
      <svg viewBox="0 0 16 16" className="h-4 w-4">
        <circle cx="8" cy="8" r="7.800" fill="#000" />
        <path d="M6 7.200H9V11.500M5.800 12H10.800" stroke="#fff" strokeWidth="1.900" fill="none" />
        <rect x="6.800" y="3" width="2.400" height="2.200" fill="#fff" />
      </svg>
      <div className="ml-[108px] flex h-6 w-[75px] items-center justify-center border border-[#bcbcbc] bg-[#e8e8e8] pt-[2px] text-[15.500px] text-[#808080]">OK</div>
      <div className="ml-[13px] flex h-6 w-[75px] items-center justify-center border border-[#bcbcbc] bg-[#e8e8e8] pt-[2px] text-[15.500px] text-[#808080]">Cancel</div>
    </div>
  </div>
);

/* ---------- timeline ---------- */

const Extrude = () => (
  <SelectIcon>
    <path d="M3 56L8 61H40L54 48" fill="none" stroke="#adb2b6" strokeWidth="4" />
    <path d="M3 17L15 4H50V40L38 53H3z" fill="#5fabe4" />
    <path d="M38 17L50 5V40L38 53z" fill="#2f86c9" />
    <path d="M4 17L15 5H49L38 17z" fill="#84c3ef" />
    <path d="M59 52V9M55 14L59 7L63 14" stroke="#3a3a3a" strokeWidth="3.400" fill="none" />
  </SelectIcon>
);

const Combine = () => (
  <SelectIcon>
    <path d="M3 16L12 5H36V17H62V46L53 55H25V42H3z" fill="#5aa7e0" />
    <path d="M3 16L12 5H36L28 16zM26 28L36 17H62L54 28z" fill="#8fcbf3" />
    <path d="M54 28L62 17V46L54 55z" fill="#2f83c4" />
    <rect x="22" y="37" width="24" height="24" fill="#fff" stroke="#484848" strokeWidth="3.500" />
  </SelectIcon>
);

const Pattern = () => (
  <SelectIcon>
    <g fill="#66acdc">
      <circle cx="33" cy="9" r="7" /><circle cx="54" cy="21" r="7" /><circle cx="54" cy="44" r="7" />
      <circle cx="33" cy="56" r="7" /><circle cx="12" cy="44" r="7" />
    </g>
    <circle cx="13" cy="21" r="5.500" fill="#f1f1f1" stroke="#555" strokeWidth="3" />
  </SelectIcon>
);

const Split = () => (
  <SelectIcon>
    <path d="M4 62V26Q6 8 20 5V46z" fill="#f7f7f7" stroke="#666" strokeWidth="3" />
    <path d="M22 22L39 4V44L22 60z" fill="#4dbd75" stroke="#339d5b" strokeWidth="2" />
    <path d="M45 22L62 4V44L45 60z" fill="#e08b57" stroke="#cf7440" strokeWidth="2" />
  </SelectIcon>
);

const Fillet = () => (
  <SelectIcon>
    <path d="M4 22L16 5H32L62 32V50L50 61H4z" fill="#eeeff0" stroke="#cfd1d2" strokeWidth="3" />
    <path d="M32 5C52 7 62 20 62 42L50 50C50 34 43 22 24 19z" fill="#d3e1ec" />
    <path d="M4 24L12 21H22C41 23 49 37 49 60" fill="#f0f1f1" stroke="#d5d7d9" strokeWidth="2" />
    <path d="M5 24L14 21H22C40 23 48 37 48 59H5z" fill="#f0f1f1" />
  </SelectIcon>
);

const sketch = <Sketch kind="pencil" />;

const steps: React.ReactNode[] = [
  sketch, <Extrude />, sketch, <Extrude />, sketch, <Extrude />, sketch, sketch, <Combine />, <Pattern />,
  sketch, <Split />, <Extrude />, <Sketch kind="active" />, <Extrude />, <Fillet />, <Fillet />,
];

const Timeline = () => (
  <div className="flex h-[65px] flex-col border-b-2 border-t-[3px] border-b-[#14204a] border-t-[#d4d4d4] bg-[#f1f1f1]">
    <div className="flex h-full pl-[12px]">
      <svg viewBox="0 0 142 20" className="mt-[20px] h-5 w-[142px]" fill="#4a4a4a">
        <path d="M0 1H2.500V18.500H0zM15.500 1V18.500L3 9.750z" />
        <path d="M43 2V17.500L30 9.750zM44 5.500H46.500V14H44z" />
        <path d="M62.500 0.500L77.500 10L62.500 19.500z" />
        <path d="M92.500 5.500H95V14H92.500zM96 2L108.500 9.750L96 17.500z" />
        <path d="M125 1L137.500 9.750L125 18.500zM138 1H140.500V18.500H138z" />
      </svg>
      <div className="relative ml-[22px] flex w-[510px] flex-col pt-[14px]">
        <div className="flex">
          {steps.map((s, i) => (
            <div key={i} className={`flex h-[30px] w-[30px] items-center justify-center ${i === 13 ? 'rounded-[2px] bg-[#0a95d9]' : ''}`}>{s}</div>
          ))}
        </div>
        <svg viewBox="0 0 510 10" className="-mt-[2px] h-[10px] w-[510px]">
          <path d="M15 7.500H496" stroke="#c9c9c9" strokeWidth="2" />
          {steps.map((_, i) => (
            <path key={i} d={`M${16 + i * 30 - (i ? 0.500 : 0)} 1V8`} stroke="#c9c9c9" strokeWidth="2" />
          ))}
        </svg>
        <svg viewBox="0 0 20 8" className="absolute left-[275px] top-[7px] h-2 w-5">
          <path d="M1.500 6.500L5 1.500M8 6.500L11.500 1.500M14.500 6.500L18 1.500" stroke="#444" strokeWidth="2.300" strokeLinecap="round" />
        </svg>
        <svg viewBox="0 0 16 41" className="absolute left-[442px] top-[11px] h-[41px] w-4">
          <path d="M0.500 0.500H15.500V5L9.500 11.500V40H7V11.500L0.500 5z" fill="#626262" />
        </svg>
      </div>
      <Gear className="ml-auto mr-[16px] mt-[20px]" />
    </div>
  </div>
);

export default function App() {
  return (
    <div className="flex h-[810px] w-[1416px] flex-col overflow-hidden bg-white font-['Liberation_Sans',sans-serif]">
      <div className="relative flex h-[745px] shrink-0">
        <Model />
        <ValueInput />
        <div className="relative flex w-[379px] flex-col pb-[5px] pl-1 pt-1">
          <div className="flex h-[31px] shrink-0 items-center border border-[#c4c4c4] bg-[#f1f1f1] pl-[5px] pr-[2px]">
            <svg viewBox="0 0 14 8" className="h-2 w-[14px]">
              <path d="M7 0V8L0.500 4zM13.500 0V8L7 4z" fill="#333" />
            </svg>
            <span className="ml-[11px] flex-1 font-['Roboto'] text-[14px] text-[#6c6c6c]">BROWSER</span>
            <RoundSign />
            <DragHandle />
          </div>
          <Browser />
          <div className="mt-auto flex h-[31px] shrink-0 items-center border border-t-0 border-[#c4c4c4] bg-[#f1f1f1] pl-[30px] pr-[2px]">
            <span className="flex-1 font-['Roboto'] text-[14px] tracking-[-0.750px] text-[#6c6c6c]">COMMENTS</span>
            <RoundSign plus />
            <DragHandle />
          </div>
        </div>
        <div className="relative flex flex-1 items-end pb-1 pl-[180px]">
          <NavBar />
        </div>
        <div className="relative flex w-[416px] flex-col pb-[9px] pt-[179px]">
          <EditFeature />
          <span className="mr-[22px] mt-auto self-end text-[14px] font-bold leading-5 tracking-[0.300px] text-[#444]">Multiple selections</span>
        </div>
      </div>
      <Timeline />
    </div>
  );
}
